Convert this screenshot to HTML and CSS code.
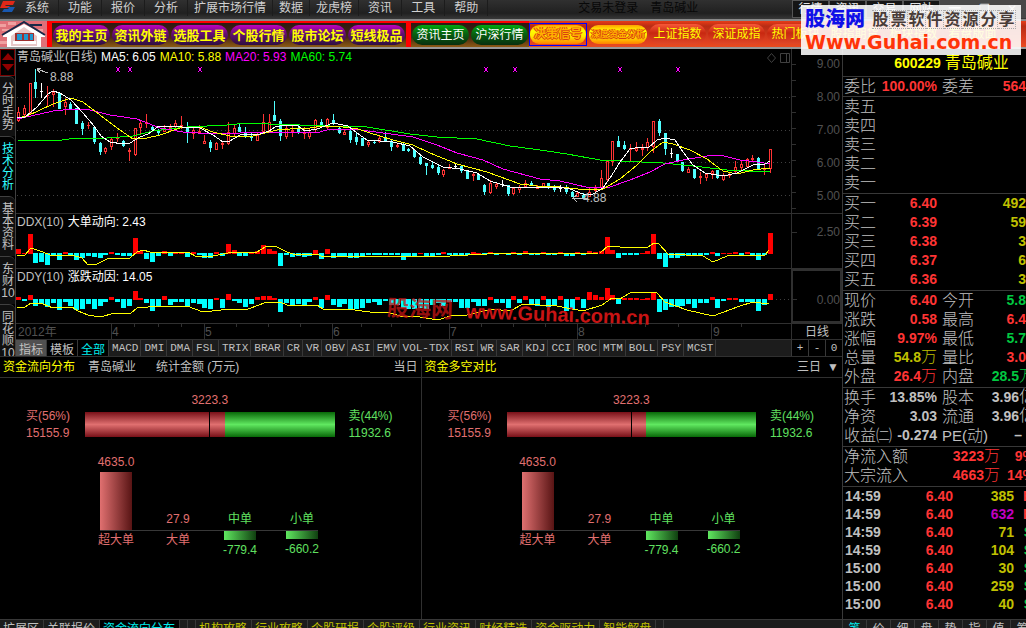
FILE: index.html
```html
<!DOCTYPE html>
<html lang="zh-CN">
<head>
<meta charset="utf-8">
<title>青岛碱业 600229</title>
<link rel="stylesheet" href="styles.css">
</head>
<body>
<div class="app">
  <header class="menubar">
    <svg class="logo" width="16" height="14" viewBox="0 0 16 14" aria-hidden="true"><path fill="#e02818" d="M3 1h12l-2 4H6L5 6h5L8 8H0z"/><path fill="#1858b0" d="M7 7h8l-3 5H2l2-3h5z"/></svg>
    <nav class="menu">
      <button>系统</button><button>功能</button><button>报价</button><button>分析</button><button class="tight">扩展市场行情</button><button class="tight">数据</button><button class="tight">龙虎榜</button><button>资讯</button><button>工具</button><button>帮助</button>
    </nav>
    <p class="session"><span>交易未登录</span><span>青岛碱业</span></p>
    <div class="modes">
      <button>行情</button><button>资讯</button><button>交易</button><button>网站</button>
      <span class="window-controls"><button aria-label="最小化">━</button><button aria-label="最大化">❐</button><button aria-label="关闭">✕</button></span>
    </div>
  </header>

  <nav class="toolbar">
    <svg class="home" width="47" height="26" viewBox="0 0 47 26" aria-hidden="true">
      <path fill="#e07078" d="M0 0h47v26H0z"/><path fill="#f0a0a0" d="M0 3h6v3H0zM8 1h8v3H8zM35 8h8v3h-8zM2 8h8v2H2zM0 20h8v3H0z"/>
      <path fill="#fff" d="M3 14 24 3l21 11v2h-4v10H7V16H3z"/>
      <path fill="#e8c8c8" d="M11 15 24 6l13 9v10H11z"/>
      <path fill="none" stroke="#182848" stroke-width="2" d="M2 14 24 1l21 13M30 4h12"/>
      <path fill="#a03030" d="M15 12h19v9H15z"/><path fill="#2098d0" d="M17 13h5v6h-5zm7 0h4v6h-4zm6 0h3v6h-3z"/><path fill="#fff" d="M13 20h23v3H13z"/>
    </svg>
    <div class="group group-dark">
      <button class="pill purple">我的主页</button><button class="pill purple">资讯外链</button><button class="pill purple">选股工具</button><button class="pill purple">个股行情</button><button class="pill purple">股市论坛</button><button class="pill purple">短线极品</button>
    </div>
    <div class="group group-dark">
      <button class="pill green">资讯主页</button><button class="pill green">沪深行情</button>
    </div>
    <div class="group group-red">
      <button class="glow selected"><span>决策信号</span></button><button class="glow small"><span>深度资金分析</span></button>
      <button class="pill red">上证指数</button><button class="pill red">深证成指</button><button class="pill red">热门板块</button><button class="pill red">股指期货</button><button class="pill red">板块指数</button><button class="pill red">看盘版面</button>
    </div>
  </nav>

  <aside class="banner">
    <p class="banner-top"><strong>股海网</strong><span class="cells"><i>股</i><i>票</i><i>软</i><i>件</i><i>资</i><i>源</i><i>分</i><i>享</i></span></p>
    <p class="banner-url">Www.Guhai.com.cn</p>
  </aside>

  <div class="workspace">
    <main class="left">
      <section class="charts">
        <nav class="side-tabs">
          <div class="scroller"><button aria-label="上"><svg width="12" height="8"><path d="M6 0l6 7H0z"/></svg></button><button aria-label="下"><svg width="12" height="8"><path d="M0 0h12L6 7z"/></svg></button></div>
          <button>分时走势</button><button class="active">技术分析</button><button>基本资料</button><button>东财10</button><button>同花顺10</button>
        </nav>
        <div class="plots">
          <div class="plot">
            <div class="plot-main">
              <h2 class="plot-head"><span>青岛碱业(日线)</span><span class="white">MA5: 6.05</span><span class="yellow">MA10: 5.88</span><span class="magenta">MA20: 5.93</span><span class="lime">MA60: 5.74</span>
                <svg class="head-icons" width="28" height="14"><path fill="none" stroke="#404040" d="M8.500 2.500l4 4.500-4 4.500-4-4.500zM17.500 2.500h9v9h-9zM23.500 2.500v9"/></svg></h2>
              <svg class="plot-svg price" viewBox="16 66 775 147" preserveAspectRatio="xMinYMin meet">
                <path class="dots" d="M17 97.500H791M17 130.500H791M17 162.500H791M17 195.500H791"/>
                <g id="candles"></g>
                <polyline stroke="#0f0" points="18,140 62,140 77,138 107,138 133,136 153,131 187,127 227,125 247,123 269,124 330,126 367,127 410,134 437,137 477,139 510,146 540,150 567,154 600,160 663,163 693,166 727,170 770,172"/>
                <polyline stroke="#f0f" points="17,119 40,114 53,111 73,109 90,110 110,115 137,119 160,128 183,132 213,134 240,133 269,132 320,132 330,129 353,129 383,133 413,137 437,145 457,153 483,160 503,169 540,179 560,181 590,188 610,187 630,180 650,172 665,164 683,160 707,156 720,155 740,160 757,162 770,164"/>
                <polyline stroke="#ff0" points="17,118 27,116 40,110 53,104 71,98 83,102 100,115 117,128 133,139 147,138 160,135 180,128 200,127 213,132 230,136 253,136 269,132 277,130 290,129 310,128 323,126 343,127 358,129 370,133 393,140 413,145 430,153 457,164 487,172 520,184 537,186 560,187 587,190 603,189 620,179 637,165 650,152 663,142 673,144 690,150 707,159 723,171 737,174 753,170 770,168"/>
                <polyline stroke="#fff" points="17,118 25,117 37,107 48,94 53,91 60,93 71,100 83,113 94,126 101,136 110,142 123,144 130,143 140,137 148,134 159,126 182,127 200,128 213,135 223,142 230,141 240,135 247,134 257,135 269,131 275,127 285,125 297,125 305,131 317,129 333,123 348,126 357,133 367,140 393,142 410,146 423,157 443,167 460,169 477,173 490,181 510,187 537,187 557,187 570,189 583,194 593,194 603,188 612,175 620,162 630,149 640,147 648,148 657,140 665,138 675,140 683,152 693,165 705,173 723,176 737,173 753,165 765,164 770,161"/>
                <path stroke="#f0f" d="M116 67l4 5m0-5l-4 5M128 67l4 5m0-5l-4 5M198 67l4 5m0-5l-4 5M484 67l4 5m0-5l-4 5M513 67l4 5m0-5l-4 5M618 67l4 5m0-5l-4 5M676 67l4 5m0-5l-4 5"/>
                <path stroke="#c0c0c0" fill="none" d="M37 69l11 4M41 68l-4 1 3 4M572 198h16M577 195l-4 3 4 4"/>
                <text x="50" y="81">8.88</text><text x="583" y="202">4.88</text>
              </svg>
            </div>
            <div class="axis price-axis"><span>9.00</span><span>8.00</span><span>7.00</span><span>6.00</span><span>5.00</span></div>
          </div>
          <div class="plot">
            <div class="plot-main">
              <h2 class="plot-head"><span>DDX(10)</span><span class="white">大单动向: 2.43</span></h2>
              <svg class="plot-svg small" viewBox="16 231 775 37" preserveAspectRatio="xMinYMin meet">
                <g id="ddx"></g>
                <polyline stroke="#ff0" points="17,255 25,255 31,248 37,250 43,252 50,255 72,255 82,258 88,265 97,264 107,259 130,258 137,252 143,250 150,252 188,252 197,257 213,256 233,252 257,252 265,247 275,246 287,252 293,254 317,254 323,257 347,256 420,256 443,257 450,256 487,254 600,253 608,246 620,247 648,247 654,243 659,244 668,254 703,256 713,262 727,256 765,255 769,250"/>
              </svg>
            </div>
            <div class="axis volume-axis"><span>2.50</span></div>
          </div>
          <div class="plot">
            <div class="plot-main">
              <h2 class="plot-head"><span>DDY(10)</span><span class="white">涨跌动因: 14.05</span></h2>
              <svg class="plot-svg small" viewBox="16 286 775 37" preserveAspectRatio="xMinYMin meet">
                <path class="dots" d="M776 299.500H791"/>
                <g id="ddy"></g>
                <polyline stroke="#ff0" points="17,307 25,307 31,303 43,304 53,308 72,307 78,311 88,315 100,317 115,313 130,314 137,308 160,306 187,306 203,312 230,309 248,309 267,302 280,302 287,305 317,305 323,309 347,309 370,312 387,312 400,316 420,317 438,320 453,315 467,315 492,309 510,311 523,304 557,306 567,308 583,311 602,305 612,298 620,299 630,293 642,292 657,293 665,302 687,310 713,316 740,306 753,302 769,304"/>
              </svg>
            </div>
            <div class="axis framed"><span>0.00</span></div>
          </div>
          <p class="stamp"><b>股海网</b><b class="stamp-url">www.Guhai.com.cn</b></p>
          <div class="timeline">
            <svg class="time-svg" viewBox="16 324 775 15" preserveAspectRatio="xMinYMin meet">
              <path stroke="#303030" d="M111.500 324v15M204.500 324v15M332.500 324v15M449.500 324v15M577.500 324v15M711.500 324v15M134.500 324v3M158.500 324v3M181.500 324v3M236.500 324v3M268.500 324v3M300.500 324v3M361.500 324v3M391.500 324v3M420.500 324v3M481.500 324v3M513.500 324v3M545.500 324v3M611.500 324v3M645.500 324v3M678.500 324v3M741.500 324v3"/>
              <g class="faint"><text x="18" y="336">2012年</text><text x="112" y="336">4</text><text x="205" y="336">5</text><text x="333" y="336">6</text><text x="450" y="336">7</text><text x="578" y="336">8</text><text x="713" y="336">9</text></g>
            </svg>
            <button class="period">日线</button>
          </div>
          <div class="indicators">
            <button class="cjk picked">指标</button><button class="cjk dark">模板</button><button class="cjk dark cyan">全部</button><button>MACD</button><button>DMI</button><button>DMA</button><button>FSL</button><button>TRIX</button><button>BRAR</button><button>CR</button><button>VR</button><button>OBV</button><button>ASI</button><button>EMV</button><button>VOL-TDX</button><button>RSI</button><button>WR</button><button>SAR</button><button>KDJ</button><button>CCI</button><button>ROC</button><button>MTM</button><button>BOLL</button><button>PSY</button><button>MCST</button>
            <div class="zoomers"><button>+</button><button>-</button><button>0</button></div>
          </div>
        </div>
      </section>

      <section class="funds">
        <article class="fund">
          <header class="fund-head"><h3>资金流向分布</h3><span>青岛碱业</span><span>统计金额 (万元)</span><span class="push">当日</span></header>
          <div class="fund-body">
            <p class="net">3223.3</p>
            <div class="gauge-row"><p class="buy">买(56%)<br>15155.9</p><div class="gauge"></div><p class="sell">卖(44%)<br>11932.6</p></div>
            <div class="orders">
              <div class="up buy">4635.0<i class="bar tall"></i></div><div class="up buy">27.9</div><div class="up sell">中单</div><div class="up sell">小单</div>
              <hr>
              <div class="buy">超大单</div><div class="buy">大单</div><div class="sell"><i class="bar down nine"></i>-779.4</div><div class="sell"><i class="bar down"></i>-660.2</div>
            </div>
          </div>
        </article>
        <article class="fund">
          <header class="fund-head"><h3>资金多空对比</h3><label class="push days"><select aria-label="统计周期"><option>三日</option><option>五日</option></select><span>▼</span></label></header>
          <div class="fund-body">
            <p class="net">3223.3</p>
            <div class="gauge-row"><p class="buy">买(56%)<br>15155.9</p><div class="gauge"></div><p class="sell">卖(44%)<br>11932.6</p></div>
            <div class="orders">
              <div class="up buy">4635.0<i class="bar tall"></i></div><div class="up buy">27.9</div><div class="up sell">中单</div><div class="up sell">小单</div>
              <hr>
              <div class="buy">超大单</div><div class="buy">大单</div><div class="sell"><i class="bar down nine"></i>-779.4</div><div class="sell"><i class="bar down"></i>-660.2</div>
            </div>
          </div>
        </article>
      </section>
      <nav class="bottom-tabs"><button>扩展区</button><button>关联报价</button><button class="active">资金流向分布</button><span class="spacer"></span><span class="spacer"></span><button class="gold">机构攻略</button><button class="gold">行业攻略</button><button class="gold">个股研报</button><button class="gold">个股评级</button><button class="gold">行业资讯</button><button class="gold">财经精选</button><button class="gold">资金驱动力</button><button class="gold">智能解盘</button><span class="spacer"></span></nav>
    </main>

    <aside class="quote">
      <h1>600229 <span>青岛碱业</span></h1>
      <table class="pairs">
        <tbody class="first"><tr><th>委比</th><td class="r">100.00%</td><th>委差</th><td class="r">564</td></tr></tbody>
      </table>
      <table class="pairs">
        <tbody><tr><th>卖五</th><td></td><th></th><td></td></tr><tr><th>卖四</th></tr><tr><th>卖三</th></tr><tr><th>卖二</th></tr><tr><th>卖一</th></tr></tbody>
      </table>
      <table class="pairs">
        <tbody><tr><th>买一</th><td class="r">6.40</td><th></th><td class="y">492</td></tr><tr><th>买二</th><td class="r">6.39</td><th></th><td class="y">59</td></tr><tr><th>买三</th><td class="r">6.38</td><th></th><td class="y">3</td></tr><tr><th>买四</th><td class="r">6.37</td><th></th><td class="y">6</td></tr><tr><th>买五</th><td class="r">6.36</td><th></th><td class="y">3</td></tr></tbody>
      </table>
      <table class="pairs">
        <tbody><tr><th>现价</th><td class="r">6.40</td><th>今开</th><td class="g">5.8</td></tr><tr><th>涨跌</th><td class="r">0.58</td><th>最高</th><td class="r">6.4</td></tr><tr><th>涨幅</th><td class="r">9.97%</td><th>最低</th><td class="g">5.7</td></tr><tr><th>总量</th><td class="y">54.8<i>万</i></td><th>量比</th><td class="r">3.0</td></tr><tr><th>外盘</th><td class="r">26.4<i>万</i></td><th>内盘</th><td class="g"><span class="bleed">28.5<i>万</i></span></td></tr></tbody>
      </table>
      <table class="pairs">
        <tbody><tr><th>换手</th><td>13.85%</td><th>股本</th><td><span class="bleed">3.96<i>亿</i></span></td></tr><tr><th>净资</th><td>3.03</td><th>流通</th><td><span class="bleed">3.96<i>亿</i></span></td></tr><tr><th>收益㈡</th><td>-0.274</td><th><b>PE(</b>动<b>)</b></th><td class="dash">–</td></tr></tbody>
      </table>
      <table class="pairs flow">
        <tbody><tr><th>净流入额</th><td class="r">3223<i>万</i></td><td class="r"><span class="bleed">9%</span></td></tr><tr><th>大宗流入</th><td class="r">4663<i>万</i></td><td class="r"><span class="bleed">14%</span></td></tr></tbody>
      </table>
      <table class="ticks">
        <tbody><tr><td>14:59</td><td class="r">6.40</td><td class="y">385</td><td class="r">B</td></tr><tr><td>14:59</td><td class="r">6.40</td><td class="m">632</td><td class="r">B</td></tr><tr><td>14:59</td><td class="r">6.40</td><td class="y">71</td><td class="g">S</td></tr><tr><td>14:59</td><td class="r">6.40</td><td class="y">104</td><td class="g">S</td></tr><tr><td>15:00</td><td class="r">6.40</td><td class="y">30</td><td class="g">S</td></tr><tr><td>15:00</td><td class="r">6.40</td><td class="y">259</td><td class="g">S</td></tr><tr><td>15:00</td><td class="r">6.40</td><td class="y">40</td><td class="g">S</td></tr></tbody>
      </table>
      <nav class="bottom-tabs small-tabs"><button class="lit">笔</button><button>价</button><button>细</button><button>盘</button><button>势</button><button>指</button><button>值</button><button>筹</button></nav>
    </aside>
  </div>
</div>
<script src="chart.js"></script>
</body>
</html>
```
FILE: styles.css
```css
* { box-sizing: border-box; }
body {
  margin: 0;
  background: #000;
  color: #c0c0c0;
  font: 12px/16px "Liberation Sans", "Noto Sans CJK SC", sans-serif;
  overflow: hidden;
}
h1, h2, h3, p { margin: 0; font-size: 12px; font-weight: normal; }
button, select {
  font: inherit;
  color: inherit;
  background: none;
  border: 0;
  border-radius: 0;
  margin: 0;
  padding: 0;
  white-space: nowrap;
}
svg { display: block; flex: none; }
i { font-style: normal; }
table { border-collapse: collapse; border-spacing: 0; }

.app { display: flex; flex-direction: column; height: 100vh; }
.white { color: #fff; }
.yellow { color: #ff0; }
.magenta { color: #f0f; }
.lime { color: #0f0; }

/* menu bar */
.menubar {
  display: flex;
  align-items: flex-start;
  flex: 0 0 19px;
  height: 19px;
  overflow: hidden;
  background: linear-gradient(#303030, #202020 70%, #383838);
}
.menu { display: flex; flex: none; }
.menu button { padding: 0 9px; border-right: 1px solid #1c1c1c; line-height: 16px; color: #d0d0d0; }
.menu .tight { padding: 0 6px; }
.session { display: flex; flex: none; gap: 12px; margin-left: 90px; color: #080808; }
.modes { display: flex; flex: none; margin-left: auto; width: 234px; height: 18px; }
.modes > button { flex: 0 0 37px; background: #151515; border: 1px solid #555; color: #e0e0e0; }
.window-controls { display: flex; flex: 1; justify-content: space-around; background: #484848; color: #ddd; }

/* toolbar */
.toolbar {
  display: flex;
  flex: 0 0 30px;
  height: 30px;
  overflow: hidden;
  border-top: 2px solid #888;
  border-bottom: 2px solid #999;
  background: #e02c14;
}
.group { display: flex; align-items: center; flex: none; gap: 2px; padding: 2px 1px 0; height: 26px; }
.group-dark {
  border-left: 5px solid #f00;
  border-top: 2px solid #f00;
  background: linear-gradient(#2c1812, #4a2810 60%, #8c5a14);
  padding-top: 0;
}
.group-red { flex: 1; background: linear-gradient(#e83c18, #b82c14 20%, #e04020 80%, #e84c20); padding: 0; }
.pill { flex: 0 0 57px; height: 20px; border-radius: 10px; line-height: 19px; color: #ff0; }
.purple { background: linear-gradient(#c000c0, #601070 45%, #301040); font-size: 13px; font-weight: bold; }
.green { background: linear-gradient(#00a810, #086010 45%, #083010); color: #fff; }
.red { background: linear-gradient(#f85838, #c82810 45%, #e04828); }
.glow {
  flex: 0 0 58px;
  height: 23px;
  color: #ffb000;
  font-weight: bold;
  text-shadow: 1px 0 #d84010, -1px 0 #d84010, 0 1px #d84010;
}
.glow span {
  display: block;
  height: 19px;
  line-height: 18px;
  border-radius: 9px;
  background: linear-gradient(#ffa000, #ff0 30%, #ffe800 60%, #ff8000);
}
.glow.small { font-size: 9px; }
.selected { border: 1px solid #00f; }

/* advert over the window controls */
.banner {
  position: absolute;
  right: 5px;
  top: 5px;
  width: 220px;
  height: 50px;
  padding: 2px 4px;
  overflow: hidden;
  background: rgba(255, 255, 255, .88);
  z-index: 5;
}
.banner-top { display: flex; gap: 7px; align-items: center; height: 24px; }
.banner-top strong { color: #1010e8; font-size: 20px; font-weight: 900; line-height: 24px; }
.cells { display: flex; color: #483c38; font-size: 16px; font-weight: bold; line-height: 18px; }
.cells i { width: 18px; height: 19px; text-align: center; border: 1px dotted #aaa; border-left-width: 0; }
.banner-url { color: #ff3408; font: bold 19px/22px "DejaVu Sans", sans-serif; }

/* workspace */
.workspace { display: flex; flex: 1; min-height: 0; }
.left { flex: 1; min-width: 0; display: flex; flex-direction: column; }
.charts { display: flex; flex: none; height: 308px; border-bottom: 1px solid #303030; }
.side-tabs { flex: 0 0 16px; display: flex; flex-direction: column; overflow: hidden; border-right: 1px solid #404040; }
.scroller { flex: 0 0 27px; display: flex; flex-direction: column; justify-content: space-evenly; align-items: center; border: 1px solid #700; }
.scroller svg { fill: #900000; }
.side-tabs > button {
  flex: none;
  padding: 6px 0 5px 1px;
  width: 15px;
  line-height: 12px;
  white-space: normal;
  word-break: break-all;
  border-top: 1px solid #404040;
  border-top-right-radius: 6px;
  background: #101010;
}
.side-tabs > .active { color: #30ffff; background: #000; }
.plots { position: relative; flex: 1; min-width: 0; }
.plot { display: flex; border-bottom: 1px solid #303030; }
.plot-main { flex: 1; min-width: 0; }
.plot-head { display: flex; gap: 4px; height: 17px; line-height: 17px; padding-left: 1px; white-space: nowrap; }
.head-icons { margin-left: auto; margin-top: 2px; }
.plot-svg, .time-svg { width: 100%; fill: none; }
.plot-svg.price { height: 147px; }
.plot-svg.small { height: 37px; }
.plot-svg text { fill: #c0c0c0; font-size: 12px; }
.plot-svg polyline, .plot-svg path { shape-rendering: crispEdges; }
.dots { stroke: #404040; stroke-dasharray: 1 3; }
.axis {
  flex: 0 0 51px;
  display: flex;
  flex-direction: column;
  border-left: 1px solid #303030;
  color: #505050;
  text-align: right;
  padding-right: 2px;
}
.axis span { line-height: 16px; padding-bottom: 1px; }
.volume-axis { padding-top: 10px; background: linear-gradient(#303030, #303030) 0 18px / 5px 1px no-repeat; }
.price-axis {
  gap: 16px;
  padding-top: 7px;
  background: repeating-linear-gradient(transparent 0 15px, #303030 15px 16px) 0 0 / 4px 100% no-repeat;
}
.axis.framed {
  border: 2px solid #303030;
  padding-top: 21px;
  padding-right: 0;
  background: linear-gradient(#303030, #303030) 0 28px / 4px 1px no-repeat;
}
.timeline { display: flex; height: 16px; border-bottom: 1px solid #303030; }
.time-svg { flex: 1; min-width: 0; height: 15px; }
.faint { fill: #505050; font-size: 12px; }
.period { flex: 0 0 51px; border-left: 1px solid #303030; line-height: 14px; }
.indicators { display: flex; height: 16px; background: #1c1c1c; font: 11px/15px "Liberation Mono", monospace; overflow: hidden; }
.indicators > button { flex: none; padding: 0 2px 0 3px; border-right: 1px solid #383838; }
.indicators > .cjk { padding: 0 3px; font: 12px/15px "Noto Sans CJK SC", sans-serif; }
.indicators .picked { background: #505050; }
.indicators .dark { background: #000; }
.indicators .cyan { color: #0ee; }
.zoomers { display: flex; flex: 0 0 51px; margin-left: auto; background: #000; }
.zoomers button { flex: 1; border-left: 1px solid #383838; }

.stamp {
  position: absolute;
  left: 371px;
  top: 252px;
  display: flex;
  gap: 13px;
  color: #c81414;
  font-size: 20px;
  line-height: 24px;
  transform: rotate(2deg);
  white-space: nowrap;
}
.stamp b:first-child { font-size: 22px; opacity: .75; }

/* fund flow */
.funds { flex: 1; min-height: 0; display: flex; }
.fund { flex: 1; min-width: 0; }
.fund + .fund { border-left: 1px solid #303030; }
.fund-head { display: flex; gap: 13px; height: 21px; line-height: 20px; padding: 0 3px; border-bottom: 1px solid #303030; }
.fund-head h3 { color: #ff0; line-height: 20px; }
.fund-head span + span { margin-left: 7px; }
.fund-head .push { margin-left: auto; }
.days { display: flex; gap: 5px; }
.days select { appearance: none; line-height: 20px; }
.fund-body { padding: 13px 27px 0 26px; }
.net { text-align: center; line-height: 18px; height: 21px; color: #e07070; }
.buy { color: #e07070; }
.sell { color: #60e060; }
.gauge-row { display: flex; gap: 14px; height: 25px; align-items: center; }
.gauge-row p { flex: 0 0 45px; line-height: 17px; white-space: nowrap; }
.gauge {
  flex: 1;
  height: 25px;
  background:
    linear-gradient(#000, #000) 50% 0 / 1px 100% no-repeat,
    linear-gradient(#781018, #e07070 50%, #781018) 0 0 / 56% 100% no-repeat,
    linear-gradient(#086808, #60e860 50%, #086808);
}
.orders { display: grid; grid-template-columns: repeat(4, 62px); grid-template-rows: 93px 1px auto; padding-left: 59px; text-align: center; line-height: 18px; }
.orders .up { align-self: end; }
.orders .up:not(:first-child) { padding-bottom: 2px; }
.orders hr { grid-column: 1 / -1; width: 218px; height: 1px; margin: 0 15px; border: 0; background: #383838; }
.bar { display: block; width: 32px; margin: 0 auto; }
.tall { height: 58px; margin-top: 1px; background: linear-gradient(90deg, #e07070, #581414); }
.down { height: 8px; margin-bottom: 1px; background: linear-gradient(90deg, #60e860, #104010); }
.nine { height: 9px; }

/* bottom tabs, partly below the fold */
.bottom-tabs { display: flex; flex: 0 0 9px; height: 9px; overflow: hidden; border-top: 1px solid #383838; background: #1c1c1c; }
.bottom-tabs button { flex: none; height: 18px; padding: 0 4px 0 3px; line-height: 17px; border-right: 1px solid #383838; }
.bottom-tabs .active { color: #0ee; background: #000; }
.bottom-tabs .gold { color: #c0c000; }
.spacer { width: 8px; border-right: 1px solid #383838; }

/* quote panel */
.quote { flex: 0 0 184px; width: 184px; min-width: 0; overflow: hidden; display: flex; flex-direction: column; border-left: 1px solid #383838; }
.quote h1 { flex: 0 0 27px; text-align: center; padding: 1px 0 0 34px; white-space: nowrap; font-size: 14px; font-weight: bold; line-height: 26px; color: #ff0; }
.quote h1 span { font-size: 16px; font-weight: normal; }
.pairs { table-layout: fixed; width: 183px; border-top: 1px solid #383838; }
.pairs tbody::after { content: ""; display: block; height: 1px; }
.pairs .first::after { display: none; }
.quote tr { height: 19px; }
.quote th { width: 35px; padding: 0 0 0 1px; font-size: 16px; font-weight: 300; line-height: 19px; text-align: left; white-space: nowrap; }
.quote th:nth-child(3) { width: 40px; padding-left: 4px; }
.quote td { padding: 0; font-size: 14px; font-weight: bold; line-height: 19px; text-align: right; white-space: nowrap; }
.pairs td:nth-child(2) { width: 60px; padding-right: 1px; }
.quote td i { font-size: 16px; font-weight: 300; line-height: 18px; }
.quote th b { font-size: 15px; font-weight: normal; }
.pairs.flow th { width: 68px; }
.pairs.flow td:nth-child(2) { width: 90px; }
.pairs .bleed { margin-right: -9px; }
.pairs .dash { padding-right: 4px; }
.r { color: #ff3434; }
.g { color: #00c840; }
.y { color: #c0c000; }
.m { color: #c000c0; }
.ticks { table-layout: fixed; width: 190px; border-top: 1px solid #383838; margin-bottom: auto; }
.ticks tr { height: 18px; }
.ticks td { line-height: 18px; }
.ticks td:first-child { width: 38px; text-align: left; padding-left: 2px; }
.ticks td:nth-child(2) { width: 72px; }
.ticks td:nth-child(3) { width: 61px; }
.small-tabs button { width: 24px; padding: 0; }
.small-tabs .lit { color: #0ee; }
```
FILE: chart.js
```js
const PITCH = 5.828;
const NS = "http://www.w3.org/2000/svg";
const xAt = i => Math.round(18 + i * PITCH);

function add(parent, name, attrs) {
  const el = document.createElementNS(NS, name);
  for (const key in attrs) el.setAttribute(key, attrs[key]);
  parent.appendChild(el);
}

// colour, high, body top, body bottom, low
const candles = `r107 112 121 122,r105 108 115 118,r83 83 114 114,c69 82 89 98,w83 91 92 98,r86 95 96 107,r89 92 95 107,c93 93 109 109,r98 102 107 115,c102 104 109 109,c108 108 124 124,c121 123 129 135,r122 125 126 129,c127 127 142 144,c142 143 152 155,r147 148 152 154,r138 139 147 150,r133 137 139 142,c140 141 146 147,r148 150 152 161,r128 128 155 156,r120 123 128 134,r114 122 124 128,c125 127 130 132,c129 131 133 135,r125 128 132 132,r124 127 130 131,r120 123 127 129,r116 125 127 129,c122 127 132 143,r127 130 134 139,r125 131 133 134,r135 141 144 144,c140 142 148 152,r142 143 150 150,r141 143 145 149,r122 132 144 145,r124 128 134 136,c123 127 132 132,c127 132 137 138,c132 136 138 141,r132 135 141 141,r114 122 132 133,r114 122 132 133,c101 115 121 121,c119 121 136 141,r125 128 137 139,r125 130 132 137,c124 128 133 134,r127 132 134 139,r128 132 137 139,r119 120 130 132,c119 122 127 127,r118 119 128 129,c114 120 123 125,c127 128 133 134,r129 132 135 135,c130 131 140 143,c133 137 142 145,c138 138 146 146,r141 142 145 147,c140 142 142 144,r135 138 142 143,c132 137 141 141,c140 142 147 151,r144 145 147 148,c142 144 151 151,c148 149 151 152,c149 150 157 158,c156 157 164 165,c163 163 166 175,c161 165 168 169,c164 167 173 175,r169 170 175 177,r164 167 169 169,w163 166 167 168,c165 166 171 173,c170 170 179 179,r173 174 176 181,c173 174 180 180,c184 185 192 195,r180 183 193 194,r182 184 187 189,w180 184 185 187,c185 185 194 196,r187 188 194 195,r185 187 190 193,r180 183 187 187,c181 183 185 185,r185 186 189 189,r183 183 188 188,c183 183 188 189,c185 186 190 192,w185 188 189 192,c185 188 192 194,c191 192 197 197,r192 193 197 197,c193 195 198 198,r187 192 197 197,r185 188 191 192,r170 178 188 190,r160 161 180 181,r141 141 162 166,c136 141 147 147,c141 145 149 150,r144 148 150 161,r142 148 151 152,r144 148 150 156,r138 142 148 151,r121 121 147 153,c119 121 133 136,c133 133 149 155,w148 153 154 158,c154 154 161 162,c162 162 171 172,r167 169 173 173,c169 169 178 179,r172 176 178 184,r173 174 178 181,r170 171 174 179,c170 170 178 179,r173 175 180 181,r172 174 176 178,r161 167 172 173,r161 164 168 170,r158 159 167 168,r155 158 160 162,c157 158 169 169,r165 168 170 175,r149 149 169 173`;
const colours = { r: "#ff3434", c: "#50ffff", w: "#ffffff" };
const candleLayer = document.getElementById("candles");
candles.split(",").forEach((entry, i) => {
  const fill = colours[entry[0]];
  const [high, top, bottom, low] = entry.slice(1).split(" ").map(Number);
  const x = xAt(i);
  const height = Math.max(bottom - top, 1);
  add(candleLayer, "rect", { x, y: high, width: 1, height: Math.max(low - high, 1), fill });
  add(candleLayer, "rect", { x: x - 1, y: top, width: 3, height, fill });
  if (entry[0] === "r" && height > 2) {
    add(candleLayer, "rect", { x, y: top + 1, width: 1, height: height - 2, fill: "#000" });
  }
});

const ddx = [5,1,20,-9,-8,-11,-1,-6,2,-2,-6,-4,-2,-3,-4,-1,2,-1,-2,-2,16,3,-5,-8,-2,3,-2,2,2,-3,2,-1,-4,-4,2,-2,10,4,-2,-2,2,3,9,5,3,-12,-1,-3,-2,-3,-2,4,-5,5,-4,-2,-2,-4,-4,-2,-1,-1,-1,-1,-1,-1,-6,-2,-2,1,-2,-2,-1,2,-1,-1,-1,-1,2,1,-1,2,-1,1,-1,2,-1,3,-1,-1,2,-1,-1,2,-2,-2,2,-1,3,2,3,17,4,-4,-1,-1,-1,1,3,20,-5,-13,-4,-4,-2,-1,-2,-1,-1,2,-2,1,1,2,-1,2,-1,-6,-1,21];
const ddy = [3,-1,5,-6,-4,-7,-3,-10,-2,-6,-10,-9,-4,-9,-6,-2,3,-2,-8,-6,9,2,-3,-11,-6,4,-5,-2,-2,-7,-3,-4,-8,-9,2,-8,6,-1,-3,-7,-4,3,4,4,2,-12,-3,-5,-4,-6,-2,3,-8,5,-5,-7,-4,-9,-9,-8,-3,-2,-5,-1,-5,-5,-8,-9,-9,-8,-9,-5,-3,-6,-2,-2,-8,-8,-2,-6,-6,3,-3,-3,-8,4,-3,4,-4,-6,4,-7,-5,4,-11,-9,3,-8,8,5,3,12,5,-4,2,2,2,1,2,7,-12,-10,-7,-7,-6,-4,-8,-3,-3,3,-8,-1,2,2,-2,-2,-2,-11,-5,6];

function drawBars(id, values, zero) {
  const layer = document.getElementById(id);
  values.forEach((v, i) => add(layer, "rect", {
    x: xAt(i) - 2,
    y: v > 0 ? zero - v : zero - 1,
    width: 5,
    height: v > 0 ? v : 1 - v,
    fill: v > 0 ? "#f00" : "#0ff"
  }));
}
drawBars("ddx", ddx, 254);
drawBars("ddy", ddy, 300);
```
